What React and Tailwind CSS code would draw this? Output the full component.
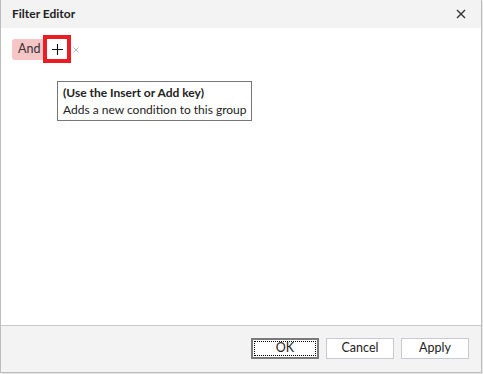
import React from 'react';

const font = { fontFamily: 'Lato, "Noto Sans", sans-serif' };

const Button = ({ label, focused }) => (
  <button
    className={
      focused
        ? 'w-[68px] h-[21px] bg-white border-2 border-[#7a7a7a] p-[1px] text-[12.5px] text-[#222]'
        : 'w-[68px] h-[21px] bg-white border border-[#c9c9d6] text-[12.5px] text-[#222]'
    }
  >
    {focused ? (
      <span className="flex h-full w-full items-center justify-center border border-dotted border-black">
        {label}
      </span>
    ) : (
      label
    )}
  </button>
);

export default function App() {
  return (
    <div className="bg-white w-[483px] h-[374px]" style={font}>
      <div className="flex flex-col w-[482px] h-[373px] border-x border-b border-[#bdbdbd] shadow-[1px_1px_2px_rgba(0,0,0,0.15)]">
        {/* Title bar */}
        <div className="flex items-center justify-between h-[28px] bg-[#f3f3f3] pl-[11px] pr-[15px]">
          <span className="text-[12px] font-bold text-[#222]">Filter Editor</span>
          <svg width="10" height="10" viewBox="0 0 10 10" className="text-[#333]">
            <path d="M1 1 L9 9 M9 1 L1 9" stroke="currentColor" strokeWidth="1.4" />
          </svg>
        </div>

        {/* Content */}
        <div className="relative flex-1 bg-white border-b border-[#c8c8cc]">
          <div className="flex items-center pl-[11px] pt-[7px]">
            <span className="flex items-center h-[21px] pl-[6px] pr-[5px] rounded-l-[3px] bg-[#f6c5c5] text-[12.5px] text-[#333]">
              And
            </span>
            <span className="flex items-center justify-center w-[28px] h-[28px] -ml-[2px] border-[4px] border-[#ec1c24] bg-white">
              <svg width="11" height="11" viewBox="0 0 11 11">
                <path d="M5.5 0 V11 M0 5.5 H11" stroke="#111" strokeWidth="1.1" />
              </svg>
            </span>
            <svg width="6" height="6" viewBox="0 0 6 6" className="ml-[2px] mt-[1px]">
              <path d="M0.5 0.5 L5.5 5.5 M5.5 0.5 L0.5 5.5" stroke="#b4b4b4" strokeWidth="1" />
            </svg>
          </div>

          {/* Tooltip */}
          <div className="absolute left-[56px] top-[53px] w-[195px] border border-[#767676] bg-white px-[5px] pt-[2px] pb-[2px] text-[12px] leading-[17px] text-[#222] whitespace-nowrap">
            <div className="font-bold">(Use the Insert or Add key)</div>
            <div>Adds a new condition to this group</div>
          </div>
        </div>

        {/* Footer */}
        <div className="flex justify-end items-start gap-[7px] h-[46px] bg-[#f3f3f3] pt-[12px] pr-[12px]">
          <Button label="OK" focused />
          <Button label="Cancel" />
          <Button label="Apply" />
        </div>
      </div>
    </div>
  );
}
